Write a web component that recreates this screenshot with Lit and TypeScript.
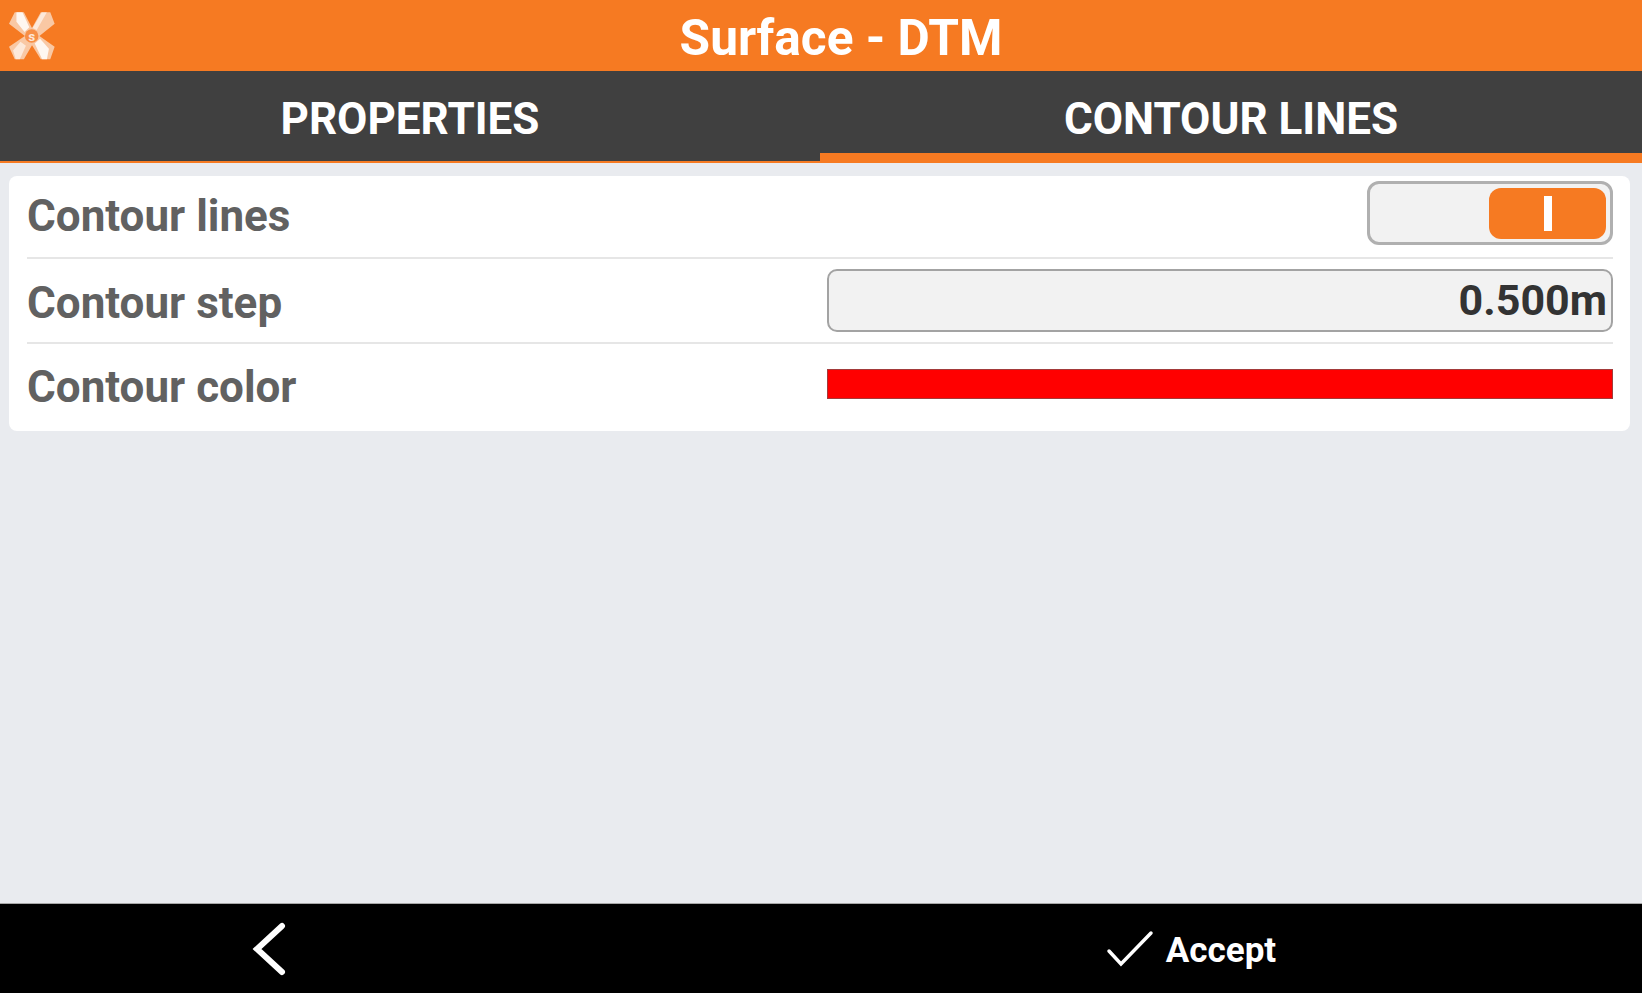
import { LitElement, html, css } from "lit";
import { customElement } from "lit/decorators.js";

@customElement("app-root")
export class AppRoot extends LitElement {
  static styles = css`
    :host {
      display: flex;
      flex-direction: column;
      width: 1642px;
      height: 993px;
      overflow: hidden;
      background: #e9ebef;
      font-family: Roboto, "Liberation Sans", sans-serif;
      font-weight: 700;
    }

    .header {
      position: relative;
      height: 71px;
      flex: none;
      display: flex;
      align-items: center;
      justify-content: center;
      background: #f67a22;
      color: #fff;
      font-size: 49.6px;
      line-height: 71px;
      padding: 6px 0 0 40px;
      box-sizing: border-box;
    }

    .logo {
      position: absolute;
      left: 9px;
      top: 12px;
      width: 46px;
      height: 48px;
    }

    .tabs {
      display: flex;
      height: 92px;
      flex: none;
      background: #404040;
    }

    .tab {
      flex: none;
      box-sizing: border-box;
      display: flex;
      align-items: center;
      justify-content: center;
      color: #fff;
      font-size: 44px;
      padding-top: 13px;
      padding-bottom: 8px;
      border-bottom: 2px solid #f67a22;
    }

    .tab.left {
      width: 820px;
    }

    .tab.right {
      width: 822px;
      border-bottom-width: 10px;
      padding-bottom: 0;
    }

    .card {
      flex: none;
      margin: 13px 12px 0 9px;
      height: 255px;
      box-sizing: border-box;
      padding: 0 17px 0 18px;
      background: #fff;
      border-radius: 8px;
      display: flex;
      flex-direction: column;
    }

    .row {
      display: flex;
      align-items: center;
      justify-content: space-between;
      box-sizing: border-box;
      color: #616161;
      font-size: 44px;
      border-bottom: 2px solid #e6e6e6;
    }

    .row.first {
      height: 83px;
    }

    .row.first span {
      padding-bottom: 2px;
    }

    .row.second {
      height: 85px;
    }

    .row.second span {
      padding-top: 5px;
    }

    .row.third {
      height: 84px;
      border-bottom: none;
    }

    .row.third span {
      padding-top: 2px;
    }

    .switch {
      width: 246px;
      height: 64px;
      margin-bottom: 8px;
      box-sizing: border-box;
      padding: 4px 4px 3px;
      display: flex;
      justify-content: flex-end;
      background: #f2f2f2;
      border: 3px solid #b0b0b0;
      border-radius: 12px;
    }

    .knob {
      width: 117px;
      height: 100%;
      display: flex;
      align-items: center;
      justify-content: center;
      background: #f67a22;
      border-radius: 12px;
    }

    .knob i {
      display: block;
      width: 8px;
      height: 35px;
      background: #fff;
    }

    .field {
      width: 786px;
      height: 63px;
      box-sizing: border-box;
      padding: 0 4px 2px 0;
      display: flex;
      align-items: center;
      justify-content: flex-end;
      background: #f2f2f2;
      border: 2px solid #a3a3a3;
      border-radius: 10px;
      color: #333;
      font-size: 43px;
    }

    .swatch {
      width: 786px;
      height: 30px;
      margin-bottom: 4px;
      box-sizing: border-box;
      background: #f00;
      border: 1px solid #a33a3a;
    }

    .spacer {
      flex: 1;
    }

    .bottom {
      display: flex;
      flex: none;
      height: 90px;
      background: #000;
      border-top: 1px solid #a8a8a8;
      box-sizing: border-box;
      color: #fff;
    }

    .back-cell {
      flex: none;
      width: 538px;
      display: flex;
      align-items: center;
      justify-content: center;
    }

    .accept {
      flex: 1;
      box-sizing: border-box;
      padding-left: 202px;
      display: flex;
      align-items: center;
      justify-content: center;
      gap: 12px;
      font-size: 35px;
    }

    .accept span {
      padding-top: 4px;
    }

    svg.back {
      width: 36px;
      height: 56px;
    }

    svg.check {
      width: 48px;
      height: 40px;
    }
  `;

  render() {
    return html`
      <div class="header">
        <svg class="logo" viewBox="28 38 136 140">
          <path
            fill="#f9c8a4"
            d="M45 38h27l24 46 26-46h28l13 34-45 36 45 32-13 37h-28l-26-42-24 42H45l-17-37 47-32-47-36z"
          />
          <path fill="#fff" d="M50 38h18l20 44-14 14-24-30z" opacity=".85" />
          <path fill="#fff" d="M104 130l16-14 26 30-6 31h-14z" opacity=".85" />
          <path fill="#fff" d="M125 38h15l-30 52-12-6z" opacity=".6" />
          <path fill="#fff" d="M62 125l16 12-18 40H48l-8-26z" opacity=".6" />
          <circle cx="95" cy="108" r="20" fill="#f78f46" />
          <text x="95" y="122" font-size="40" font-weight="700" text-anchor="middle" fill="#fde7d8">s</text>
        </svg>
        Surface - DTM
      </div>
      <div class="tabs">
        <div class="tab left">PROPERTIES</div>
        <div class="tab right">CONTOUR LINES</div>
      </div>
      <div class="card">
        <div class="row first">
          <span>Contour lines</span>
          <div class="switch"><div class="knob"><i></i></div></div>
        </div>
        <div class="row second">
          <span>Contour step</span>
          <div class="field">0.500m</div>
        </div>
        <div class="row third">
          <span>Contour color</span>
          <div class="swatch"></div>
        </div>
      </div>
      <div class="spacer"></div>
      <div class="bottom">
        <div class="back-cell">
          <svg class="back" viewBox="0 0 36 56">
            <path d="M31 5 6 28l25 23" fill="none" stroke="#fff" stroke-width="6" stroke-linecap="round" />
          </svg>
        </div>
        <div class="accept">
          <svg class="check" viewBox="0 0 48 40">
            <path d="M3 22 15 35 45 4" fill="none" stroke="#fff" stroke-width="3.5" stroke-linecap="round" />
          </svg>
          <span>Accept</span>
        </div>
      </div>
    `;
  }
}
